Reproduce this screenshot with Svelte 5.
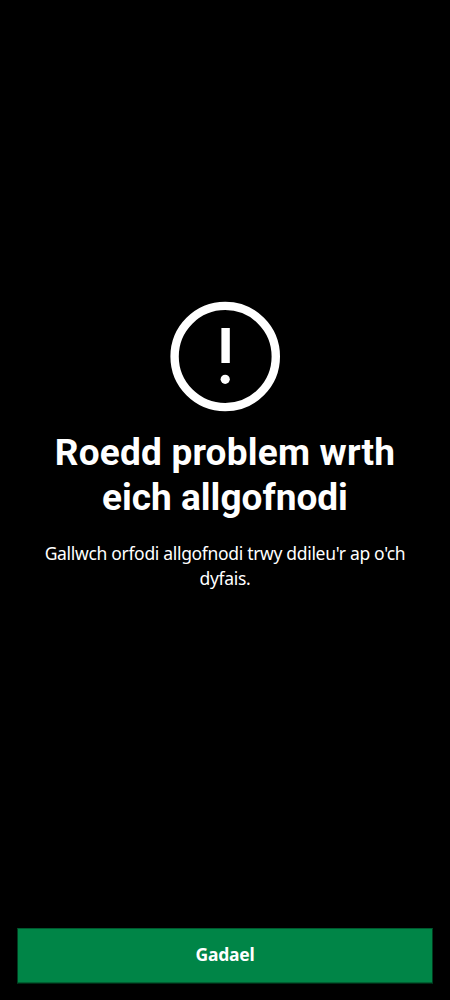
<script>
  const heading = ['Roedd problem wrth', 'eich allgofnodi'];
  const body = ["Gallwch orfodi allgofnodi trwy ddileu'r ap o'ch", 'dyfais.'];
</script>

<main>
  <section>
    <svg width="110" height="111" viewBox="0 0 110 111" aria-hidden="true">
      <circle cx="55.2" cy="55.5" r="50.6" fill="none" stroke="#fff" stroke-width="8.4" />
      <rect x="51.4" y="27" width="8.4" height="35" fill="#fff" />
      <circle cx="55.2" cy="78.3" r="4.6" fill="#fff" />
    </svg>
    <h1>
      {#each heading as line}<span>{line}</span>{/each}
    </h1>
    <p>
      {#each body as line}<span>{line}</span>{/each}
    </p>
  </section>
  <button>Gadael</button>
</main>

<style>
  :global(body) { margin: 0; background: #000; }
  main {
    box-sizing: border-box;
    height: 1000px;
    padding: 301px 17px 16px;
    display: flex;
    flex-direction: column;
    justify-content: space-between;
    background: #000;
    color: #fff;
    font-family: "Noto Sans", sans-serif;
    text-align: center;
  }
  section { display: flex; flex-direction: column; align-items: center; }
  svg { display: block; }
  span { display: block; white-space: nowrap; }
  h1 { margin: 18px 0 0; font: 700 37px/45px Roboto, sans-serif; }
  h1 span { letter-spacing: 0.2px; }
  h1 span:last-child { letter-spacing: 0; }
  p { margin: 21px 0 0; font-size: 17.5px; line-height: 25px; }
  p span { letter-spacing: -0.32px; }
  button {
    height: 56px;
    padding: 0 0 5px;
    border: 1px solid #003d1f;
    border-top-color: #00592f;
    border-bottom-color: #002914;
    box-shadow: inset 0 -1px #005f31;
    background: #008547;
    color: #fff;
    font: 700 17.5px/24px "Noto Sans", sans-serif;
    letter-spacing: -0.2px;
  }
</style>
